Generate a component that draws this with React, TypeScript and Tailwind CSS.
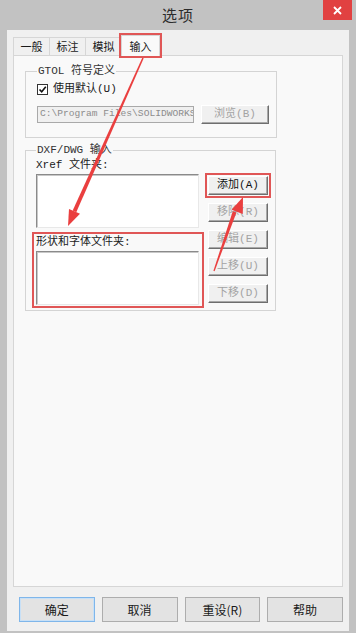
import React from "react";

const monoCjk = "font-['Liberation_Mono','Noto_Sans_CJK_SC',monospace]";

function ClassicButton({ label, enabled = false, className = "" }: { label: string; enabled?: boolean; className?: string }) {
  return (
    <div
      className={`flex items-center justify-center h-[19px] w-[60px] bg-[#f0f0f0] border border-t-white border-l-white border-b-[#6e6e6e] border-r-[#6e6e6e] shadow-[inset_-1px_-1px_0_#a8a8a8] text-[11px] leading-none ${monoCjk} ${enabled ? "text-[#111]" : "text-[#a3a3a3]"} ${className}`}
    >
      {label}
    </div>
  );
}

function ListBox() {
  return (
    <div className="h-[54px] w-[163px] bg-white border border-t-[#8a8a8a] border-l-[#8a8a8a] border-b-[#e8e8e8] border-r-[#e8e8e8] shadow-[inset_1px_1px_0_#c8c8c8]" />
  );
}

function Arrows() {
  return (
    <svg className="absolute inset-0 pointer-events-none" width="356" height="633" viewBox="0 0 356 633">
      <polygon points="143.7,58.3 142.3,57.7 72.7,210.6 76.3,212.2" fill="#ea3f3f" />
      <polygon points="68,226 80,213.8 69,209" fill="#ea3f3f" />
      <polygon points="214.6,271.2 213.4,270.8 232.8,211.2 236.4,212.6" fill="#ea3f3f" />
      <polygon points="243,197 242.8,214.1 231.6,209.7" fill="#ea3f3f" />
    </svg>
  );
}

export default function App() {
  const tabs = ["一般", "标注", "模拟"];
  const sideButtons = ["移除(R)", "编辑(E)", "上移(U)", "下移(D)"];
  const bottomButtons = ["确定", "取消", "重设(R)", "帮助"];

  return (
    <div className="relative w-[356px] h-[633px] bg-[#c2c2c2] px-[7px] pb-[2px] flex flex-col font-['Noto_Sans_CJK_SC','Noto_Sans',sans-serif] text-[#1a1a1a]">
      {/* title bar */}
      <div className="relative h-[30px] flex items-center justify-center shrink-0">
        <span className="text-[15px] text-[#2b2b2b] tracking-[1px]">选项</span>
        <div className="absolute right-[-3px] top-0 w-[29px] h-[20px] bg-[#e14141] flex items-center justify-center">
          <svg width="9" height="9" viewBox="0 0 9 9">
            <path d="M1 1 L8 8 M8 1 L1 8" stroke="white" strokeWidth="1.8" />
          </svg>
        </div>
      </div>

      {/* body */}
      <div className="flex-1 bg-[#f0f0f0] px-[6px] pt-[7px] pb-[9px] flex flex-col">
        {/* tabs */}
        <div className="flex items-end h-[18px] text-[11px] leading-none">
          {tabs.map((t) => (
            <div key={t} className="h-[18px] w-[37px] flex items-center justify-center border border-b-0 border-[#d6d6d6] -mr-px bg-[#f0f0f0]">
              {t}
            </div>
          ))}
          <div className="relative z-10 h-[21px] w-[39px] -mb-px flex items-center justify-center border border-b-0 border-[#d6d6d6] bg-[#f9f9f9] outline-2 outline-[#e05656]">
            输入
          </div>
        </div>

        {/* tab panel */}
        <div className="flex-1 bg-[#f9f9f9] border border-[#d6d6d6] pl-[11px] pt-[9px] flex flex-col gap-[6px]">
          {/* GTOL */}
          <fieldset className="w-[251px] border border-[#d4d4d4] pl-[11px] pr-[7px] pb-[13px]">
            <legend className={`px-[1px] text-[11px] leading-[12px] text-[#333] ${monoCjk}`}>GTOL 符号定义</legend>
            <div className="flex items-center gap-[5px] mt-[6px] h-[12px]">
              <div className="w-[11px] h-[11px] border border-[#333] bg-white flex items-center justify-center">
                <svg width="9" height="9" viewBox="0 0 9 9">
                  <path d="M1.5 4.5 L3.7 6.8 L7.8 1.8" stroke="#111" strokeWidth="1.6" fill="none" />
                </svg>
              </div>
              <span className={`text-[11px] leading-none ${monoCjk}`}>使用默认(U)</span>
            </div>
            <div className="flex items-center gap-[7px] mt-[10px]">
              <div className="h-[17px] w-[157px] border border-[#a9a9a9] bg-[#f0f0f0] overflow-hidden whitespace-nowrap pl-[2px] flex items-center text-[9.6px] text-[#8c8c8c] font-['Liberation_Mono',monospace]">
                C:\Program Files\SOLIDWORKS
              </div>
              <ClassicButton label="浏览(B)" className="w-[68px]" />
            </div>
          </fieldset>

          {/* DXF/DWG */}
          <fieldset className="w-[251px] border border-[#d4d4d4] pl-[10px] pb-[2px]">
            <legend className={`px-[1px] text-[11px] leading-[12px] text-[#333] ${monoCjk}`}>DXF/DWG 输入</legend>
            <div className="flex gap-[9px]">
              <div className="flex flex-col">
                <div className={`text-[11px] leading-[12px] mt-[3px] mb-[3px] ${monoCjk}`}>Xref 文件夹:</div>
                <ListBox />
                <div className="mt-[4px] -ml-[4px] -mr-[5px] border-2 border-[#e05656] pl-[2px] pr-[3px] pt-[2px] pb-[1px]">
                  <div className={`text-[11px] leading-[12px] mb-[3px] ${monoCjk}`}>形状和字体文件夹:</div>
                  <ListBox />
                </div>
              </div>
              <div className="flex flex-col gap-[8px] pt-[20px]">
                <div className="outline-2 outline-[#e05656] outline-offset-1">
                  <ClassicButton label="添加(A)" enabled className="h-[18px]" />
                </div>
                {sideButtons.map((b) => (
                  <ClassicButton key={b} label={b} />
                ))}
              </div>
            </div>
          </fieldset>
        </div>

        {/* bottom buttons */}
        <div className="flex gap-[7px] pl-[6px] mt-[10px]">
          {bottomButtons.map((b, i) => (
            <div
              key={b}
              className={`h-[25px] w-[76px] flex items-center justify-center text-[12px] bg-[#e3e3e3] border ${i === 0 ? "border-[#7fb6ea] shadow-[inset_0_0_0_1px_#c8e0f6]" : "border-[#adadad]"}`}
            >
              {b}
            </div>
          ))}
        </div>
      </div>

      <Arrows />
    </div>
  );
}
